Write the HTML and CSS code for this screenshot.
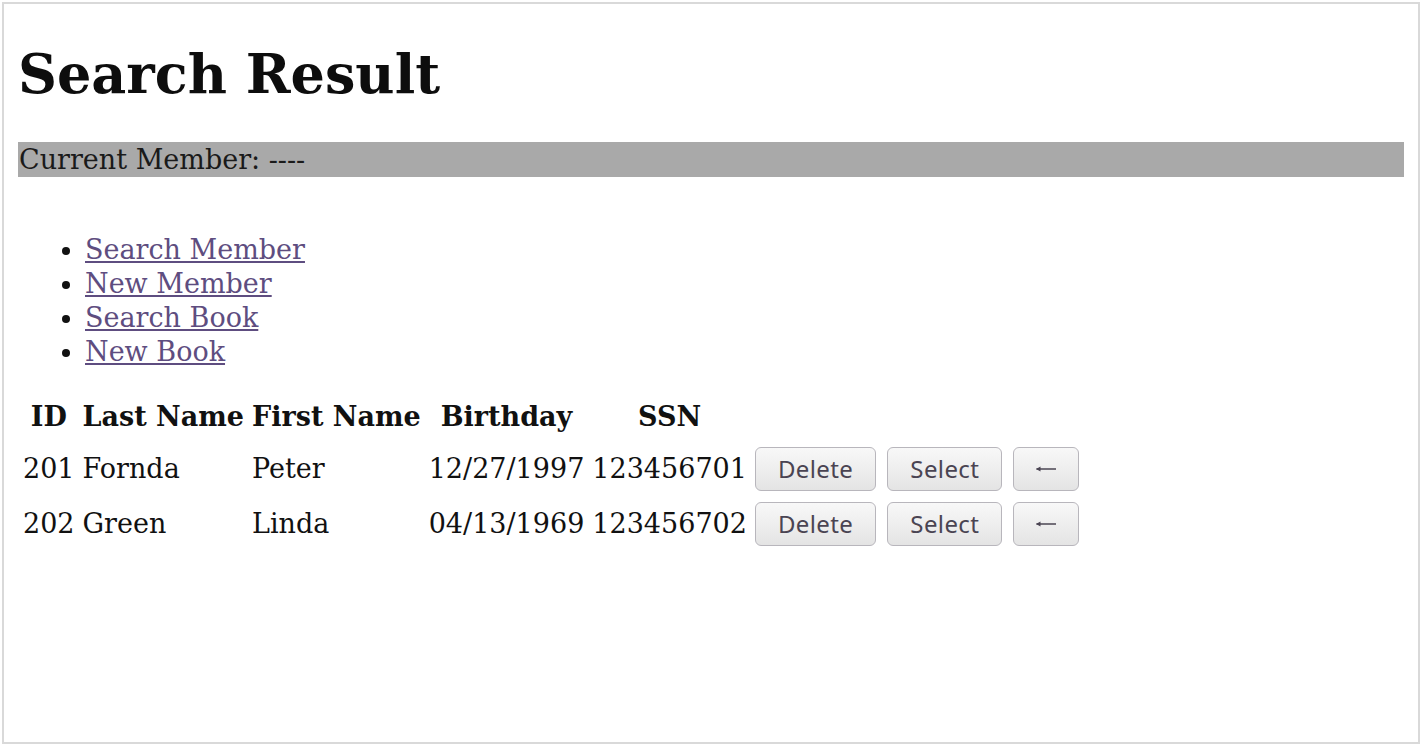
FILE: index.html
```html
<!DOCTYPE html>
<html>
<head>
<meta charset="utf-8">
<title>Search Result</title>
<link rel="stylesheet" href="styles.css">
</head>
<body>
<div class="frame">
  <h1 class="title">Search Result</h1>
  <div class="member">Current Member: ----</div>
  <ul class="nav">
    <li><a href="#">Search Member</a></li>
    <li><a href="#">New Member</a></li>
    <li><a href="#">Search Book</a></li>
    <li><a href="#">New Book</a></li>
  </ul>
  <table class="results">
    <thead>
      <tr><th>ID</th><th>Last Name</th><th>First Name</th><th>Birthday</th><th>SSN</th><th></th><th></th><th></th></tr>
    </thead>
    <tbody>
      <tr><td>201</td><td>Fornda</td><td>Peter</td><td>12/27/1997</td><td>123456701</td><td><button class="btn btn-del">Delete</button></td><td><button class="btn btn-sel">Select</button></td><td><button class="btn btn-arrow" aria-label="back"><svg class="arrow" width="22" height="10" viewBox="0 0 22 10"><path d="M1.5 5 H21" stroke="#4a4452" stroke-width="1.5" fill="none"/><path d="M1 5 L5.5 2.5 L5.5 7.5 Z" fill="#4a4452"/></svg></button></td></tr>
      <tr><td>202</td><td>Green</td><td>Linda</td><td>04/13/1969</td><td>123456702</td><td><button class="btn btn-del">Delete</button></td><td><button class="btn btn-sel">Select</button></td><td><button class="btn btn-arrow" aria-label="back"><svg class="arrow" width="22" height="10" viewBox="0 0 22 10"><path d="M1.5 5 H21" stroke="#4a4452" stroke-width="1.5" fill="none"/><path d="M1 5 L5.5 2.5 L5.5 7.5 Z" fill="#4a4452"/></svg></button></td></tr>
    </tbody>
  </table>
</div>
</body>
</html>
```

FILE: styles.css
```css
html, body {
  margin: 0;
  padding: 0;
  background: #ffffff;
}
body {
  font-family: "DejaVu Serif", serif;
  color: #111111;
}
.frame {
  box-sizing: border-box;
  margin: 2px 3px 3px 2px;
  height: 742px;
  border: 2px solid #d9d9d9;
  padding: 1px 14px 0 14px;
}
.title {
  font-size: 54px;
  font-weight: bold;
  margin: 38px 0 0 0;
  line-height: 63px;
  color: #0d0d0d;
}
.member {
  margin-top: 36px;
  background: #a9a9a9;
  font-size: 27px;
  height: 35px;
  line-height: 35px;
  padding: 0 1px;
  color: #1a1a1a;
}
.nav {
  margin: 55.5px 0 0 0;
  padding: 0 0 0 67px;
  font-size: 27px;
  line-height: 34.3px;
}
.nav a {
  color: #5e4d80;
  text-decoration: underline;
}
.results {
  margin: 18.5px 0 0 -1px;
  border-spacing: 4px 8px;
  font-size: 27px;
}
.results th {
  font-weight: bold;
  text-align: center;
  padding: 0 2px;
  height: 41px;
  line-height: 31px;
}
.results td {
  padding: 0 2px;
  height: 47px;
  line-height: 31px;
  white-space: nowrap;
}
.btn {
  font-family: "Noto Sans", "Open Sans", sans-serif;
  font-size: 24px;
  letter-spacing: 0.4px;
  color: #4a4452;
  background: linear-gradient(#f8f8f8, #e4e4e4);
  border: 1px solid #b8b6bc;
  border-radius: 6px;
  height: 44px;
  padding: 0 22px;
  margin: 0 3px 0 0;
  vertical-align: middle;
}
.btn-arrow {
  width: 66px;
  padding: 0;
  letter-spacing: 0;
  display: inline-flex;
  align-items: center;
  justify-content: center;
}
.arrow {
  display: block;
}
```
